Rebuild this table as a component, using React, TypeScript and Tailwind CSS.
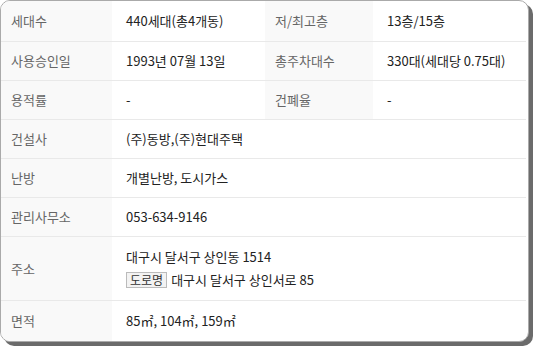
const font = { fontFamily: '"Noto Sans CJK KR", "Noto Sans", sans-serif' };

type Pair = { label: string; value: React.ReactNode };

const twoCol: [Pair, Pair][] = [
  [
    { label: '세대수', value: '440세대(총4개동)' },
    { label: '저/최고층', value: '13층/15층' },
  ],
  [
    { label: '사용승인일', value: '1993년 07월 13일' },
    { label: '총주차대수', value: '330대(세대당 0.75대)' },
  ],
  [
    { label: '용적률', value: '-' },
    { label: '건폐율', value: '-' },
  ],
];

function Label({ children, w }: { children: React.ReactNode; w: string }) {
  return (
    <div className={`${w} shrink-0 flex items-center bg-[#f9f9f9] pl-[10px] text-[#666]`}>
      {children}
    </div>
  );
}

export default function App() {
  return (
    <div className="bg-white w-[535px] h-[347px]" style={font}>
      <div className="w-[529px] overflow-hidden rounded-[10px] border border-[#aaa] bg-white shadow-[4px_4px_0_#6b6b6b] text-[13px] text-[#222]">
        {twoCol.map(([a, b], i) => (
          <div
            key={a.label}
            className={`flex ${i === 0 ? 'h-[41px]' : 'h-[39px]'} border-b border-[#e9e9e9] mr-[2px]`}
          >
            <Label w="w-[111px]">{a.label}</Label>
            <div className="w-[153px] flex items-center pl-[14px]">{a.value}</div>
            <Label w="w-[108px]">{b.label}</Label>
            <div className="flex-1 flex items-center pl-[14px]">{b.value}</div>
          </div>
        ))}
        {[
          { label: '건설사', value: '(주)동방,(주)현대주택' },
          { label: '난방', value: '개별난방, 도시가스' },
          { label: '관리사무소', value: '053-634-9146' },
        ].map((r) => (
          <div key={r.label} className="flex h-[39px] border-b border-[#e9e9e9] mr-[2px]">
            <Label w="w-[111px]">{r.label}</Label>
            <div className="flex-1 flex items-center pl-[14px]">{r.value}</div>
          </div>
        ))}
        <div className="flex h-[64px] border-b border-[#e9e9e9] mr-[2px]">
          <Label w="w-[111px]">주소</Label>
          <div className="flex-1 flex flex-col justify-center pl-[14px] gap-[5px]">
            <div className="leading-[18px]">대구시 달서구 상인동 1514</div>
            <div className="flex items-center gap-[4px] leading-[18px]">
              <span className="border border-[#bbb] bg-[#f3f3f3] px-[3px] text-[12px] leading-[14px] text-[#333]">
                도로명
              </span>
              대구시 달서구 상인서로 85
            </div>
          </div>
        </div>
        <div className="flex h-[40px] mr-[2px]">
          <Label w="w-[111px]">면적</Label>
          <div className="flex-1 flex items-center pl-[14px]">85㎡, 104㎡, 159㎡</div>
        </div>
      </div>
    </div>
  );
}
